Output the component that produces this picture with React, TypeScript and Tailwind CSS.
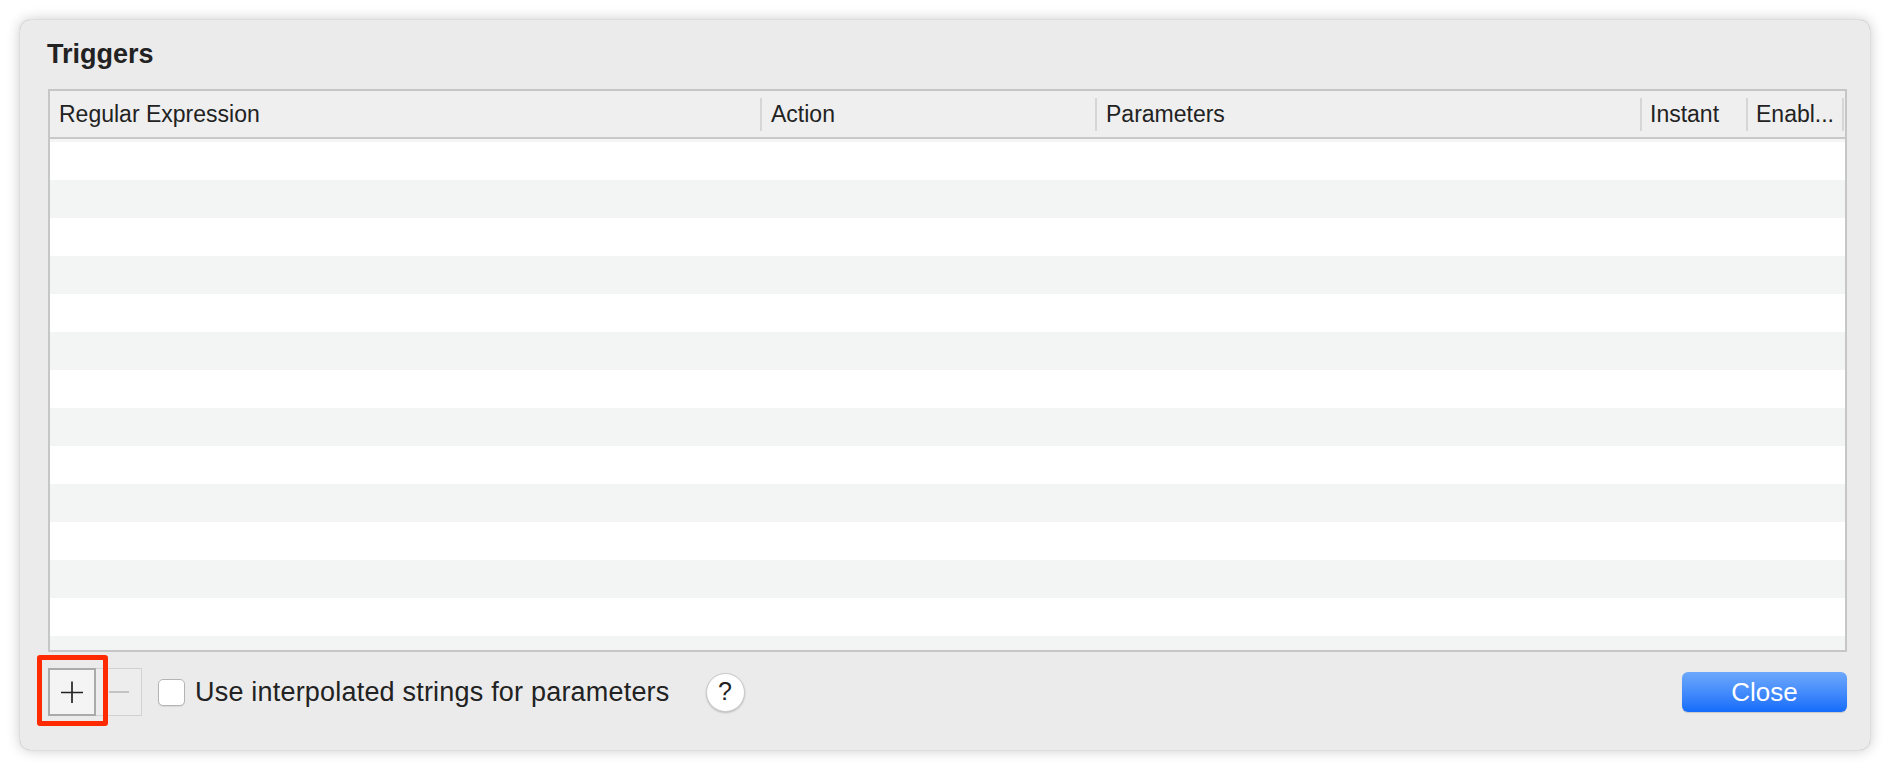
import React from "react";

const font = { fontFamily: '"Liberation Sans", Arial, sans-serif' };

function HeaderSep() {
  return <div className="w-[2px] h-[33px] bg-[#d6d6d6] shrink-0" />;
}

export default function App() {
  const rows = Array.from({ length: 14 });
  return (
    <div className="w-[1890px] h-[770px] bg-white p-[20px]" style={font}>
      <div className="w-[1850px] h-[730px] rounded-[10px] bg-[#ebebeb] shadow-[0_0_14px_rgba(0,0,0,0.22),0_0_1px_rgba(0,0,0,0.35)] flex flex-col">
        <div className="ml-[27px] mt-[19px] h-[30px] leading-[30px] text-[27px] font-bold text-[#222]">
          Triggers
        </div>
        <div className="ml-[28px] mt-[20px] w-[1799px] h-[563px] border-2 border-[#c6c6c6] bg-white flex flex-col overflow-hidden">
          <div className="h-[46px] bg-[#efefef] flex items-center text-[23px] text-[#222] shrink-0">
            <div className="w-[710px] pl-[9px]">Regular Expression</div>
            <HeaderSep />
            <div className="w-[333px] pl-[9px]">Action</div>
            <HeaderSep />
            <div className="w-[543px] pl-[9px]">Parameters</div>
            <HeaderSep />
            <div className="w-[104px] pl-[8px]">Instant</div>
            <HeaderSep />
            <div className="w-[94px] pl-[8px] whitespace-nowrap">Enabl...</div>
            <HeaderSep />
            <div className="flex-1" />
          </div>
          <div className="h-[2px] bg-[#c9c9c9] shrink-0" />
          <div className="h-[3px] bg-[#f5f5f5] shrink-0" />
          {rows.map((_, i) => (
            <div
              key={i}
              className={`h-[38px] shrink-0 ${i % 2 === 0 ? "bg-white" : "bg-[#f3f4f4]"}`}
            />
          ))}
        </div>
        <div className="ml-[28px] mt-[16px] w-[1799px] h-[48px] flex items-center">
          <div className="relative w-[48px] h-[48px] border-2 border-[#aaaaaa] bg-[#f3f4f3] flex items-center justify-center shrink-0">
            <svg width="24" height="24" viewBox="0 0 24 24">
              <path d="M1 12.5 H23 M12 1.5 V23" stroke="#222" strokeWidth="1.7" fill="none" />
            </svg>
            <div className="absolute left-[-13px] top-[-15px] w-[71px] h-[71px] border-[5px] border-[#ff2a00] rounded-[3px] z-10" />
          </div>
          <div className="w-[46px] h-[48px] border-[1.5px] border-l-0 border-[#d2d2d2] bg-[#ededed] flex items-center justify-center shrink-0">
            <div className="w-[20px] h-[1.5px] bg-[#c4c4c4]" />
          </div>
          <div className="ml-[16px] w-[27px] h-[27px] rounded-[5px] border border-[#b4b4b4] bg-white shadow-[0_1px_1px_rgba(0,0,0,0.08)] shrink-0" />
          <div className="ml-[10px] text-[27px] leading-[32px] text-[#222] tracking-[0.2px] whitespace-nowrap">
            Use interpolated strings for parameters
          </div>
          <div className="ml-[36px] w-[39px] h-[39px] rounded-full bg-white border border-[#c9c9c9] shadow-[0_1px_2px_rgba(0,0,0,0.2)] flex items-center justify-center text-[25px] text-[#222] shrink-0">
            ?
          </div>
          <div className="ml-auto w-[165px] h-[40px] rounded-[6px] bg-gradient-to-b from-[#6da8fb] to-[#126cfb] shadow-[0_1px_1px_rgba(0,0,0,0.15)] flex items-center justify-center text-white text-[26px] shrink-0">
            Close
          </div>
        </div>
      </div>
    </div>
  );
}
